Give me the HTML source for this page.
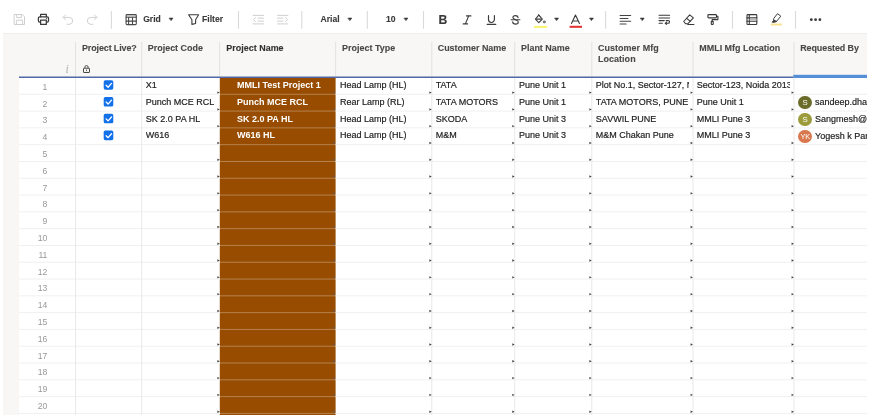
<!DOCTYPE html><html><head><meta charset="utf-8"><title>Sheet</title><style>
html,body{margin:0;padding:0;background:#fff;}
body{width:886px;height:415px;position:relative;overflow:hidden;font-family:"Liberation Sans",sans-serif;color:#222;}
#root{position:absolute;left:0;top:0;width:886px;height:415px;will-change:transform;}
.abs{position:absolute;}
.hdr{position:absolute;left:3px;top:33px;width:864px;height:44px;background:#f8f7f5;border-top:1px solid #efeeec;box-sizing:border-box;}
.lstrip{position:absolute;left:3px;top:33px;width:16px;height:382px;background:#f8f7f5;}
.ht{position:absolute;font-weight:bold;font-size:8.95px;line-height:10.4px;color:#484848;-webkit-text-stroke:0.1px #484848;white-space:nowrap;}
.ct{position:absolute;font-size:9px;line-height:10px;color:#1c1c1c;-webkit-text-stroke:0.18px #1c1c1c;white-space:nowrap;overflow:hidden;}
.rn{position:absolute;font-size:8.6px;line-height:10px;color:#989898;width:20px;text-align:right;}
.vs{position:absolute;width:1px;background:#e4e4e4;}
.hs{position:absolute;height:1px;background:#ececec;}
.tb{position:absolute;font-weight:bold;font-size:8.6px;color:#3a3a3a;-webkit-text-stroke:0.12px #3a3a3a;line-height:10px;white-space:nowrap;}
.tsep{position:absolute;top:11px;width:1px;height:17px;background:#d9d9d9;}
.caret{position:absolute;width:0;height:0;border-left:2.2px solid transparent;border-right:2.2px solid transparent;border-top:3px solid #2a2a2a;top:17.8px;}
.cb{position:absolute;width:9.5px;height:9.5px;border-radius:1.6px;background:#1571e8;}
.mk{position:absolute;width:0;height:0;border-top:1.5px solid transparent;border-bottom:1.5px solid transparent;border-left:2.3px solid #444;}
.av{position:absolute;width:13.5px;height:13.5px;border-radius:50%;color:#fff;font-size:7px;line-height:13.5px;text-align:center;}
</style></head><body><div id="root">
<div class="lstrip"></div><div class="hdr"></div>
<svg class="abs" style="left:0;top:0" width="886" height="33" viewBox="0 0 886 33" fill="none" stroke-linecap="round" stroke-linejoin="round">
<!-- save -->
<g transform="translate(14,14)" stroke="#cfcfcf" stroke-width="1">
<path d="M0.5 0.5H8.3L10.5 2.7V10.5H0.5Z"/><path d="M2.7 0.5V3.6H7.4V0.5"/><path d="M2.4 10.5V6.2H8.6V10.5"/>
</g>
<!-- print -->
<g transform="translate(37.7,13.6)" stroke="#3a3a3a" stroke-width="1.25">
<path d="M2.9 3.2V0.7H8.6V3.2"/><rect x="0.7" y="3.2" width="10.1" height="5.3" rx="1.3"/><rect x="2.9" y="6.4" width="5.7" height="4.4" fill="#fff"/><path d="M8.6 5.0H9.0" stroke-width="0.9"/>
</g>
<!-- undo -->
<g transform="translate(62.6,14.6)" stroke="#cfcfcf" stroke-width="1">
<path d="M3 0.3L0.5 2.8L3 5.3"/><path d="M0.8 2.8H6.6A3.4 3.4 0 0 1 6.6 9.7H4.6"/>
</g>
<!-- redo -->
<g transform="translate(97.4,14.6) scale(-1,1)" stroke="#cfcfcf" stroke-width="1">
<path d="M3 0.3L0.5 2.8L3 5.3"/><path d="M0.8 2.8H6.6A3.4 3.4 0 0 1 6.6 9.7H4.6"/>
</g>
<!-- grid icon -->
<g transform="translate(125.2,14)" stroke="#4a4a4a" stroke-width="1.1">
<rect x="1.1" y="1.3" width="9.8" height="1.6" fill="#d9d9d9" stroke="none"/><rect x="0.9" y="0.6" width="10.2" height="10" rx="0.9"/><path d="M0.9 3.2H11.1M0.9 7.1H11.1M3.4 3.2V10.6M7.3 3.2V10.6"/>
</g>
<!-- filter -->
<g transform="translate(187.9,14.2)" stroke="#3a3a3a" stroke-width="1.1">
<path d="M0.7 0.6H10.7L7.7 5.5V9.3L4 10.2V5.5Z"/>
</g>
<!-- outdent -->
<g transform="translate(252.8,14.9)" stroke="#cfcfcf" stroke-width="1">
<path d="M0.3 0.5H10.7M0.3 9H10.7M5.2 3.3H10.7M5.2 6.2H10.7M2.6 2.7L0.6 4.75L2.6 6.8"/>
</g>
<!-- indent -->
<g transform="translate(277.2,14.9)" stroke="#cfcfcf" stroke-width="1">
<path d="M0.3 0.5H10.7M0.3 9H10.7M0.3 3.3H5.8M0.3 6.2H5.8M8.4 2.7L10.4 4.75L8.4 6.8"/>
</g>
<!-- I -->
<g transform="translate(462.9,15.3)" stroke="#3a3a3a" stroke-width="1.15">
<path d="M3.6 0.6H8M0.3 8.6H4.7M5.8 0.6L2.5 8.6"/>
</g>
<!-- U -->
<g transform="translate(486.9,15.3)" stroke="#3a3a3a" stroke-width="1.15">
<path d="M1.6 0.3V4.2A2.95 2.95 0 0 0 7.5 4.2V0.3"/><path d="M0.2 9H8.9"/>
</g>
<!-- S strike -->
<g transform="translate(510.9,15.3)" stroke="#3a3a3a" stroke-width="1.1">
<path d="M7.2 2.3C7 0.9 5.9 0.3 4.6 0.3C3.1 0.3 2 1 2 2.3C2 3.4 2.9 3.9 4.6 4.4C6.4 4.9 7.4 5.4 7.4 6.7C7.4 8 6.2 8.8 4.6 8.8C3 8.8 1.9 8 1.7 6.6"/><path d="M0.2 4.5H9"/>
</g>
<!-- bucket -->
<g transform="translate(535,14.2)" stroke="#3a3a3a" stroke-width="1.05">
<path d="M3.8 0.9L7.3 4.9L3.8 8.4L0.4 4.9Z"/><path d="M1.3 4.9H6.4"/><path d="M3.6 0.3L4.9 1.9" stroke-width="0.9"/><circle cx="9.2" cy="7.7" r="1" stroke-width="0.8"/>
</g>
<rect x="533.9" y="25.9" width="13.2" height="2" fill="#f8f56c"/>
<!-- A -->
<g transform="translate(570.6,14.6)" stroke="#3a3a3a" stroke-width="1.1">
<path d="M0.9 8.8L4.85 0.5L8.9 8.8M2.3 6.4H7.5"/>
</g>
<rect x="569.6" y="25.8" width="12.4" height="2" fill="#e03030"/>
<!-- align -->
<g transform="translate(619.8,14.9)" stroke="#444" stroke-width="1.05">
<path d="M0.3 0.6H10.9M0.3 3.5H8.2M0.3 6.3H10.9M0.3 9.1H6.3"/>
</g>
<!-- wrap -->
<g transform="translate(658.7,14.6)" stroke="#3a3a3a" stroke-width="1.05">
<path d="M0.3 0.7H10.9M0.3 3.3H10.9M0.3 6H5.6M0.3 8.7H3.7"/><path d="M7.4 6H9.5A1.35 1.35 0 0 1 9.5 8.7H6.7M7.8 7.6L6.5 8.7L7.8 9.8"/>
</g>
<!-- eraser -->
<g transform="translate(683.1,14.2)" stroke="#3a3a3a" stroke-width="1.05">
<path d="M6.6 0.6L10.3 3.6L4.6 9.6H2.6L0.6 7.3Z"/><path d="M3.4 4.2L7.3 7"/><path d="M4.6 10.2H10.8"/>
</g>
<!-- roller -->
<g transform="translate(707.3,14)" stroke="#3a3a3a" stroke-width="1.15">
<rect x="0.6" y="0.6" width="8.6" height="3.3" rx="0.8"/><path d="M9.2 2.2H10.6V5.6H4.9V7.3"/><rect x="4" y="7.3" width="1.9" height="3.2" rx="0.5"/>
</g>
<!-- cond format -->
<g transform="translate(746.4,14)" stroke="#3a3a3a" stroke-width="1.1">
<rect x="0.6" y="0.6" width="9.8" height="9.9" rx="0.8"/><path d="M0.6 3.9H10.4M0.6 7.2H10.4M2.9 0.6V10.5"/><rect x="3.4" y="4.4" width="6.6" height="2.3" fill="#bdbdbd" stroke="none"/>
</g>
<!-- highlighter -->
<g transform="translate(771.4,13.3)" stroke="#3a3a3a" stroke-width="1">
<path d="M6.4 0.6L9.4 2.9L4.9 8.3L2.2 7.2L2.4 5.4Z"/><path d="M2.2 7.2L0.8 8.9L3 8.9L4.9 8.3Z" fill="#3a3a3a"/>
</g>
<rect x="770.9" y="23.5" width="11.1" height="2" fill="#f9e391"/>
<!-- seps -->
<g fill="#dadada" stroke="none"><rect x="110.85" y="11" width="1.1" height="17.7"/><rect x="237.95" y="11" width="1.1" height="17.7"/><rect x="301.25" y="11" width="1.1" height="17.7"/><rect x="366.75" y="11" width="1.1" height="17.7"/><rect x="422.95" y="11" width="1.1" height="17.7"/><rect x="605.05" y="11" width="1.1" height="17.7"/><rect x="731.95" y="11" width="1.1" height="17.7"/><rect x="794.95" y="11" width="1.1" height="17.7"/></g>
<!-- carets -->
<g fill="#333" stroke="#333" stroke-width="0.6"><path d="M169.4 18.1h3.6l-1.8 2.3z"/><path d="M348.2 18.1h3.6l-1.8 2.3z"/><path d="M404.3 18.1h3.6l-1.8 2.3z"/><path d="M554.9 18.1h3.6l-1.8 2.3z"/><path d="M589.8 18.1h3.6l-1.8 2.3z"/><path d="M640.6 18.1h3.6l-1.8 2.3z"/></g>
<!-- dots -->
<g fill="#3a3a3a" stroke="none"><circle cx="811.3" cy="19.7" r="1.4"/><circle cx="815.6" cy="19.7" r="1.4"/><circle cx="819.9" cy="19.7" r="1.4"/></g>
</svg>
<div class="tb" style="left:143.2px;top:14px">Grid</div>
<div class="tb" style="left:202.1px;top:14px">Filter</div>
<div class="tb" style="left:320.5px;top:14px">Arial</div>
<div class="tb" style="left:386px;top:14px">10</div>
<div class="tb" style="left:438.4px;top:12.6px;font-size:12.2px;line-height:14px">B</div>

<div class="abs" style="left:19px;top:78px;width:848px;height:335px;background:#fff"></div>
<svg class="abs" style="left:0;top:0" width="886" height="415" viewBox="0 0 886 415"><rect x="219.8" y="77.9" width="115.8" height="337.2" fill="#974c00"/></svg>
<svg class="abs" style="left:0;top:0" width="886" height="415" viewBox="0 0 886 415"><rect x="19" y="93.78" width="201" height="1" fill="#f0f0f0"/><rect x="220" y="93.78" width="115.6" height="1" fill="#fff" fill-opacity="0.3"/><rect x="335.6" y="93.78" width="531.4" height="1" fill="#f0f0f0"/><rect x="19" y="110.57" width="201" height="1" fill="#f0f0f0"/><rect x="220" y="110.57" width="115.6" height="1" fill="#fff" fill-opacity="0.3"/><rect x="335.6" y="110.57" width="531.4" height="1" fill="#f0f0f0"/><rect x="19" y="127.37" width="201" height="1" fill="#f0f0f0"/><rect x="220" y="127.37" width="115.6" height="1" fill="#fff" fill-opacity="0.3"/><rect x="335.6" y="127.37" width="531.4" height="1" fill="#f0f0f0"/><rect x="19" y="144.16" width="201" height="1" fill="#f0f0f0"/><rect x="220" y="144.16" width="115.6" height="1" fill="#fff" fill-opacity="0.3"/><rect x="335.6" y="144.16" width="531.4" height="1" fill="#f0f0f0"/><rect x="19" y="160.96" width="201" height="1" fill="#f0f0f0"/><rect x="220" y="160.96" width="115.6" height="1" fill="#fff" fill-opacity="0.3"/><rect x="335.6" y="160.96" width="531.4" height="1" fill="#f0f0f0"/><rect x="19" y="177.76" width="201" height="1" fill="#f0f0f0"/><rect x="220" y="177.76" width="115.6" height="1" fill="#fff" fill-opacity="0.3"/><rect x="335.6" y="177.76" width="531.4" height="1" fill="#f0f0f0"/><rect x="19" y="194.55" width="201" height="1" fill="#f0f0f0"/><rect x="220" y="194.55" width="115.6" height="1" fill="#fff" fill-opacity="0.3"/><rect x="335.6" y="194.55" width="531.4" height="1" fill="#f0f0f0"/><rect x="19" y="211.35" width="201" height="1" fill="#f0f0f0"/><rect x="220" y="211.35" width="115.6" height="1" fill="#fff" fill-opacity="0.3"/><rect x="335.6" y="211.35" width="531.4" height="1" fill="#f0f0f0"/><rect x="19" y="228.14" width="201" height="1" fill="#f0f0f0"/><rect x="220" y="228.14" width="115.6" height="1" fill="#fff" fill-opacity="0.3"/><rect x="335.6" y="228.14" width="531.4" height="1" fill="#f0f0f0"/><rect x="19" y="244.94" width="201" height="1" fill="#f0f0f0"/><rect x="220" y="244.94" width="115.6" height="1" fill="#fff" fill-opacity="0.3"/><rect x="335.6" y="244.94" width="531.4" height="1" fill="#f0f0f0"/><rect x="19" y="261.74" width="201" height="1" fill="#f0f0f0"/><rect x="220" y="261.74" width="115.6" height="1" fill="#fff" fill-opacity="0.3"/><rect x="335.6" y="261.74" width="531.4" height="1" fill="#f0f0f0"/><rect x="19" y="278.53" width="201" height="1" fill="#f0f0f0"/><rect x="220" y="278.53" width="115.6" height="1" fill="#fff" fill-opacity="0.3"/><rect x="335.6" y="278.53" width="531.4" height="1" fill="#f0f0f0"/><rect x="19" y="295.33" width="201" height="1" fill="#f0f0f0"/><rect x="220" y="295.33" width="115.6" height="1" fill="#fff" fill-opacity="0.3"/><rect x="335.6" y="295.33" width="531.4" height="1" fill="#f0f0f0"/><rect x="19" y="312.12" width="201" height="1" fill="#f0f0f0"/><rect x="220" y="312.12" width="115.6" height="1" fill="#fff" fill-opacity="0.3"/><rect x="335.6" y="312.12" width="531.4" height="1" fill="#f0f0f0"/><rect x="19" y="328.92" width="201" height="1" fill="#f0f0f0"/><rect x="220" y="328.92" width="115.6" height="1" fill="#fff" fill-opacity="0.3"/><rect x="335.6" y="328.92" width="531.4" height="1" fill="#f0f0f0"/><rect x="19" y="345.72" width="201" height="1" fill="#f0f0f0"/><rect x="220" y="345.72" width="115.6" height="1" fill="#fff" fill-opacity="0.3"/><rect x="335.6" y="345.72" width="531.4" height="1" fill="#f0f0f0"/><rect x="19" y="362.51" width="201" height="1" fill="#f0f0f0"/><rect x="220" y="362.51" width="115.6" height="1" fill="#fff" fill-opacity="0.3"/><rect x="335.6" y="362.51" width="531.4" height="1" fill="#f0f0f0"/><rect x="19" y="379.31" width="201" height="1" fill="#f0f0f0"/><rect x="220" y="379.31" width="115.6" height="1" fill="#fff" fill-opacity="0.3"/><rect x="335.6" y="379.31" width="531.4" height="1" fill="#f0f0f0"/><rect x="19" y="396.10" width="201" height="1" fill="#f0f0f0"/><rect x="220" y="396.10" width="115.6" height="1" fill="#fff" fill-opacity="0.3"/><rect x="335.6" y="396.10" width="531.4" height="1" fill="#f0f0f0"/><rect x="19" y="412.90" width="201" height="1" fill="#f0f0f0"/><rect x="220" y="412.90" width="115.6" height="1" fill="#fff" fill-opacity="0.3"/><rect x="335.6" y="412.90" width="531.4" height="1" fill="#f0f0f0"/><rect x="75.00" y="41.8" width="1" height="34.4" fill="#e3e2e0"/><rect x="75.00" y="78" width="1" height="337" fill="#e9e9e9"/><rect x="141.20" y="41.8" width="1" height="34.4" fill="#e3e2e0"/><rect x="141.20" y="78" width="1" height="337" fill="#e9e9e9"/><rect x="219.10" y="41.8" width="1" height="34.4" fill="#e3e2e0"/><rect x="335.10" y="41.8" width="1" height="34.4" fill="#e3e2e0"/><rect x="431.30" y="41.8" width="1" height="34.4" fill="#e3e2e0"/><rect x="431.30" y="78" width="1" height="337" fill="#e9e9e9"/><rect x="514.20" y="41.8" width="1" height="34.4" fill="#e3e2e0"/><rect x="514.20" y="78" width="1" height="337" fill="#e9e9e9"/><rect x="591.30" y="41.8" width="1" height="34.4" fill="#e3e2e0"/><rect x="591.30" y="78" width="1" height="337" fill="#e9e9e9"/><rect x="692.50" y="41.8" width="1" height="34.4" fill="#e3e2e0"/><rect x="692.50" y="78" width="1" height="337" fill="#e9e9e9"/><rect x="793.50" y="41.8" width="1" height="34.4" fill="#e3e2e0"/><rect x="793.50" y="78" width="1" height="337" fill="#e9e9e9"/></svg>
<svg class="abs" style="left:0;top:0" width="886" height="415" viewBox="0 0 886 415"><rect x="19" y="76.5" width="774.3" height="1.5" fill="#5068a8"/><rect x="793.3" y="74.8" width="73.7" height="3.2" fill="#5590d6"/></svg>
<div class="ht" style="left:82.0px;top:43.2px;letter-spacing:-0.115px">Project Live?</div>
<div class="ht" style="left:147.8px;top:43.2px;letter-spacing:0.000px">Project Code</div>
<div class="ht" style="left:226.2px;top:43.2px;letter-spacing:0.025px;color:#303030;-webkit-text-stroke-color:#303030">Project Name</div>
<div class="ht" style="left:342.0px;top:43.2px;letter-spacing:0.020px">Project Type</div>
<div class="ht" style="left:437.7px;top:43.2px;letter-spacing:0.000px">Customer Name</div>
<div class="ht" style="left:521.0px;top:43.2px;letter-spacing:0.000px">Plant Name</div>
<div class="ht" style="left:598.0px;top:43.2px;letter-spacing:0.050px">Customer Mfg<br>Location</div>
<div class="ht" style="left:699.3px;top:43.2px;letter-spacing:0.000px">MMLI Mfg Location</div>
<div class="ht" style="left:800.2px;top:43.2px;letter-spacing:-0.075px">Requested By</div>
<div class="abs" style="left:65.4px;top:63.3px;font-family:'Liberation Serif',serif;font-style:italic;font-size:11.5px;line-height:12px;color:#b0b0b0">i</div>
<svg class="abs" style="left:82px;top:64px" width="10" height="10" viewBox="0 0 10 10"><rect x="1.5" y="4.2" width="6" height="4.3" rx="0.4" fill="none" stroke="#4a4a4a" stroke-width="1"/><path d="M2.9 4.2V3.1a1.6 1.6 0 0 1 3.2 0v1.1" fill="none" stroke="#4a4a4a" stroke-width="0.95"/><rect x="4.1" y="5.4" width="0.8" height="1.8" fill="#4a4a4a"/></svg>
<div class="rn" style="left:27.3px;top:81.78px">1</div>
<div class="ct" style="left:145.8px;top:80.03px;width:72px">X1</div>
<div class="ct" style="left:237px;top:80.03px;width:96px;color:#fff;font-weight:bold;-webkit-text-stroke:0">MMLI Test Project 1</div>
<div class="ct" style="left:339.9px;top:80.03px;width:88px">Head Lamp (HL)</div>
<div class="ct" style="left:435.7px;top:80.03px;width:75px">TATA</div>
<div class="ct" style="left:518.9px;top:80.03px;width:70px">Pune Unit 1</div>
<div class="ct" style="left:595.8px;top:80.03px;width:93px">Plot No.1, Sector-127, Noida</div>
<div class="ct" style="left:696.8px;top:80.03px;width:93.2px">Sector-123, Noida 201301</div>
<div class="rn" style="left:27.3px;top:98.58px">2</div>
<div class="ct" style="left:145.8px;top:96.83px;width:72px">Punch MCE RCL</div>
<div class="ct" style="left:237px;top:96.83px;width:96px;color:#fff;font-weight:bold;-webkit-text-stroke:0">Punch MCE RCL</div>
<div class="ct" style="left:339.9px;top:96.83px;width:88px">Rear Lamp (RL)</div>
<div class="ct" style="left:435.7px;top:96.83px;width:75px">TATA MOTORS</div>
<div class="ct" style="left:518.9px;top:96.83px;width:70px">Pune Unit 1</div>
<div class="ct" style="left:595.8px;top:96.83px;width:93px">TATA MOTORS, PUNE</div>
<div class="ct" style="left:696.8px;top:96.83px;width:93.2px">Pune Unit 1</div>
<div class="av" style="left:798.4px;top:95.98px;background:#6b6b2a;font-size:7.8px">S</div>
<div class="ct" style="left:815px;top:97.23px;width:52px">sandeep.dhage</div>
<div class="rn" style="left:27.3px;top:115.37px">3</div>
<div class="ct" style="left:145.8px;top:113.62px;width:72px">SK 2.0 PA HL</div>
<div class="ct" style="left:237px;top:113.62px;width:96px;color:#fff;font-weight:bold;-webkit-text-stroke:0">SK 2.0 PA HL</div>
<div class="ct" style="left:339.9px;top:113.62px;width:88px">Head Lamp (HL)</div>
<div class="ct" style="left:435.7px;top:113.62px;width:75px">SKODA</div>
<div class="ct" style="left:518.9px;top:113.62px;width:70px">Pune Unit 3</div>
<div class="ct" style="left:595.8px;top:113.62px;width:93px">SAVWIL PUNE</div>
<div class="ct" style="left:696.8px;top:113.62px;width:93.2px">MMLI Pune 3</div>
<div class="av" style="left:798.4px;top:112.77px;background:#9b9b3c;font-size:7.8px">S</div>
<div class="ct" style="left:815px;top:114.02px;width:52px">Sangmesh@mmli</div>
<div class="rn" style="left:27.3px;top:132.17px">4</div>
<div class="ct" style="left:145.8px;top:130.42px;width:72px">W616</div>
<div class="ct" style="left:237px;top:130.42px;width:96px;color:#fff;font-weight:bold;-webkit-text-stroke:0">W616 HL</div>
<div class="ct" style="left:339.9px;top:130.42px;width:88px">Head Lamp (HL)</div>
<div class="ct" style="left:435.7px;top:130.42px;width:75px">M&amp;M</div>
<div class="ct" style="left:518.9px;top:130.42px;width:70px">Pune Unit 3</div>
<div class="ct" style="left:595.8px;top:130.42px;width:93px">M&amp;M Chakan Pune</div>
<div class="ct" style="left:696.8px;top:130.42px;width:93.2px">MMLI Pune 3</div>
<div class="av" style="left:798.4px;top:129.57px;background:#d9784e;font-size:7.4px;letter-spacing:-0.2px">YK</div>
<div class="ct" style="left:815px;top:130.82px;width:52px">Yogesh k Parmar</div>
<div class="rn" style="left:27.3px;top:148.96px">5</div>
<div class="rn" style="left:27.3px;top:165.76px">6</div>
<div class="rn" style="left:27.3px;top:182.56px">7</div>
<div class="rn" style="left:27.3px;top:199.35px">8</div>
<div class="rn" style="left:27.3px;top:216.15px">9</div>
<div class="rn" style="left:27.3px;top:232.94px">10</div>
<div class="rn" style="left:27.3px;top:249.74px">11</div>
<div class="rn" style="left:27.3px;top:266.54px">12</div>
<div class="rn" style="left:27.3px;top:283.33px">13</div>
<div class="rn" style="left:27.3px;top:300.13px">14</div>
<div class="rn" style="left:27.3px;top:316.92px">15</div>
<div class="rn" style="left:27.3px;top:333.72px">16</div>
<div class="rn" style="left:27.3px;top:350.52px">17</div>
<div class="rn" style="left:27.3px;top:367.31px">18</div>
<div class="rn" style="left:27.3px;top:384.11px">19</div>
<div class="rn" style="left:27.3px;top:400.90px">20</div>
<svg class="abs" style="left:0;top:0" width="886" height="415" viewBox="0 0 886 415"><path fill="#3c3c3c" d="M217.40 91.38l2.3 1.2l-2.3 1.2zM429.40 91.38l2.3 1.2l-2.3 1.2zM512.30 91.38l2.3 1.2l-2.3 1.2zM589.40 91.38l2.3 1.2l-2.3 1.2zM690.60 91.38l2.3 1.2l-2.3 1.2zM791.60 91.38l2.3 1.2l-2.3 1.2zM217.40 108.18l2.3 1.2l-2.3 1.2zM429.40 108.18l2.3 1.2l-2.3 1.2zM512.30 108.18l2.3 1.2l-2.3 1.2zM589.40 108.18l2.3 1.2l-2.3 1.2zM690.60 108.18l2.3 1.2l-2.3 1.2zM791.60 108.18l2.3 1.2l-2.3 1.2zM217.40 124.97l2.3 1.2l-2.3 1.2zM429.40 124.97l2.3 1.2l-2.3 1.2zM512.30 124.97l2.3 1.2l-2.3 1.2zM589.40 124.97l2.3 1.2l-2.3 1.2zM690.60 124.97l2.3 1.2l-2.3 1.2zM791.60 124.97l2.3 1.2l-2.3 1.2zM217.40 141.77l2.3 1.2l-2.3 1.2zM429.40 141.77l2.3 1.2l-2.3 1.2zM512.30 141.77l2.3 1.2l-2.3 1.2zM589.40 141.77l2.3 1.2l-2.3 1.2zM690.60 141.77l2.3 1.2l-2.3 1.2zM791.60 141.77l2.3 1.2l-2.3 1.2zM217.40 158.56l2.3 1.2l-2.3 1.2zM429.40 158.56l2.3 1.2l-2.3 1.2zM512.30 158.56l2.3 1.2l-2.3 1.2zM589.40 158.56l2.3 1.2l-2.3 1.2zM690.60 158.56l2.3 1.2l-2.3 1.2zM791.60 158.56l2.3 1.2l-2.3 1.2zM217.40 175.36l2.3 1.2l-2.3 1.2zM429.40 175.36l2.3 1.2l-2.3 1.2zM512.30 175.36l2.3 1.2l-2.3 1.2zM589.40 175.36l2.3 1.2l-2.3 1.2zM690.60 175.36l2.3 1.2l-2.3 1.2zM791.60 175.36l2.3 1.2l-2.3 1.2zM217.40 192.16l2.3 1.2l-2.3 1.2zM429.40 192.16l2.3 1.2l-2.3 1.2zM512.30 192.16l2.3 1.2l-2.3 1.2zM589.40 192.16l2.3 1.2l-2.3 1.2zM690.60 192.16l2.3 1.2l-2.3 1.2zM791.60 192.16l2.3 1.2l-2.3 1.2zM217.40 208.95l2.3 1.2l-2.3 1.2zM429.40 208.95l2.3 1.2l-2.3 1.2zM512.30 208.95l2.3 1.2l-2.3 1.2zM589.40 208.95l2.3 1.2l-2.3 1.2zM690.60 208.95l2.3 1.2l-2.3 1.2zM791.60 208.95l2.3 1.2l-2.3 1.2zM217.40 225.75l2.3 1.2l-2.3 1.2zM429.40 225.75l2.3 1.2l-2.3 1.2zM512.30 225.75l2.3 1.2l-2.3 1.2zM589.40 225.75l2.3 1.2l-2.3 1.2zM690.60 225.75l2.3 1.2l-2.3 1.2zM791.60 225.75l2.3 1.2l-2.3 1.2zM217.40 242.54l2.3 1.2l-2.3 1.2zM429.40 242.54l2.3 1.2l-2.3 1.2zM512.30 242.54l2.3 1.2l-2.3 1.2zM589.40 242.54l2.3 1.2l-2.3 1.2zM690.60 242.54l2.3 1.2l-2.3 1.2zM791.60 242.54l2.3 1.2l-2.3 1.2zM217.40 259.34l2.3 1.2l-2.3 1.2zM429.40 259.34l2.3 1.2l-2.3 1.2zM512.30 259.34l2.3 1.2l-2.3 1.2zM589.40 259.34l2.3 1.2l-2.3 1.2zM690.60 259.34l2.3 1.2l-2.3 1.2zM791.60 259.34l2.3 1.2l-2.3 1.2zM217.40 276.14l2.3 1.2l-2.3 1.2zM429.40 276.14l2.3 1.2l-2.3 1.2zM512.30 276.14l2.3 1.2l-2.3 1.2zM589.40 276.14l2.3 1.2l-2.3 1.2zM690.60 276.14l2.3 1.2l-2.3 1.2zM791.60 276.14l2.3 1.2l-2.3 1.2zM217.40 292.93l2.3 1.2l-2.3 1.2zM429.40 292.93l2.3 1.2l-2.3 1.2zM512.30 292.93l2.3 1.2l-2.3 1.2zM589.40 292.93l2.3 1.2l-2.3 1.2zM690.60 292.93l2.3 1.2l-2.3 1.2zM791.60 292.93l2.3 1.2l-2.3 1.2zM217.40 309.73l2.3 1.2l-2.3 1.2zM429.40 309.73l2.3 1.2l-2.3 1.2zM512.30 309.73l2.3 1.2l-2.3 1.2zM589.40 309.73l2.3 1.2l-2.3 1.2zM690.60 309.73l2.3 1.2l-2.3 1.2zM791.60 309.73l2.3 1.2l-2.3 1.2zM217.40 326.52l2.3 1.2l-2.3 1.2zM429.40 326.52l2.3 1.2l-2.3 1.2zM512.30 326.52l2.3 1.2l-2.3 1.2zM589.40 326.52l2.3 1.2l-2.3 1.2zM690.60 326.52l2.3 1.2l-2.3 1.2zM791.60 326.52l2.3 1.2l-2.3 1.2zM217.40 343.32l2.3 1.2l-2.3 1.2zM429.40 343.32l2.3 1.2l-2.3 1.2zM512.30 343.32l2.3 1.2l-2.3 1.2zM589.40 343.32l2.3 1.2l-2.3 1.2zM690.60 343.32l2.3 1.2l-2.3 1.2zM791.60 343.32l2.3 1.2l-2.3 1.2zM217.40 360.12l2.3 1.2l-2.3 1.2zM429.40 360.12l2.3 1.2l-2.3 1.2zM512.30 360.12l2.3 1.2l-2.3 1.2zM589.40 360.12l2.3 1.2l-2.3 1.2zM690.60 360.12l2.3 1.2l-2.3 1.2zM791.60 360.12l2.3 1.2l-2.3 1.2zM217.40 376.91l2.3 1.2l-2.3 1.2zM429.40 376.91l2.3 1.2l-2.3 1.2zM512.30 376.91l2.3 1.2l-2.3 1.2zM589.40 376.91l2.3 1.2l-2.3 1.2zM690.60 376.91l2.3 1.2l-2.3 1.2zM791.60 376.91l2.3 1.2l-2.3 1.2zM217.40 393.71l2.3 1.2l-2.3 1.2zM429.40 393.71l2.3 1.2l-2.3 1.2zM512.30 393.71l2.3 1.2l-2.3 1.2zM589.40 393.71l2.3 1.2l-2.3 1.2zM690.60 393.71l2.3 1.2l-2.3 1.2zM791.60 393.71l2.3 1.2l-2.3 1.2zM217.40 410.50l2.3 1.2l-2.3 1.2zM429.40 410.50l2.3 1.2l-2.3 1.2zM512.30 410.50l2.3 1.2l-2.3 1.2zM589.40 410.50l2.3 1.2l-2.3 1.2zM690.60 410.50l2.3 1.2l-2.3 1.2zM791.60 410.50l2.3 1.2l-2.3 1.2z"/><path fill="#6b5a55" d="M333.20 91.38l2.3 1.2l-2.3 1.2zM333.20 108.18l2.3 1.2l-2.3 1.2zM333.20 124.97l2.3 1.2l-2.3 1.2zM333.20 141.77l2.3 1.2l-2.3 1.2zM333.20 158.56l2.3 1.2l-2.3 1.2zM333.20 175.36l2.3 1.2l-2.3 1.2zM333.20 192.16l2.3 1.2l-2.3 1.2zM333.20 208.95l2.3 1.2l-2.3 1.2zM333.20 225.75l2.3 1.2l-2.3 1.2zM333.20 242.54l2.3 1.2l-2.3 1.2zM333.20 259.34l2.3 1.2l-2.3 1.2zM333.20 276.14l2.3 1.2l-2.3 1.2zM333.20 292.93l2.3 1.2l-2.3 1.2zM333.20 309.73l2.3 1.2l-2.3 1.2zM333.20 326.52l2.3 1.2l-2.3 1.2zM333.20 343.32l2.3 1.2l-2.3 1.2zM333.20 360.12l2.3 1.2l-2.3 1.2zM333.20 376.91l2.3 1.2l-2.3 1.2zM333.20 393.71l2.3 1.2l-2.3 1.2zM333.20 410.50l2.3 1.2l-2.3 1.2z"/><g transform="translate(103.7,80.18)"><rect width="9.6" height="9.6" rx="1.7" fill="#1270e8"/><path d="M2.4 5.1L4.4 7.1L7.8 3.2" fill="none" stroke="#fff" stroke-width="1.3" stroke-linecap="round" stroke-linejoin="round"/></g><g transform="translate(103.7,96.98)"><rect width="9.6" height="9.6" rx="1.7" fill="#1270e8"/><path d="M2.4 5.1L4.4 7.1L7.8 3.2" fill="none" stroke="#fff" stroke-width="1.3" stroke-linecap="round" stroke-linejoin="round"/></g><g transform="translate(103.7,113.77)"><rect width="9.6" height="9.6" rx="1.7" fill="#1270e8"/><path d="M2.4 5.1L4.4 7.1L7.8 3.2" fill="none" stroke="#fff" stroke-width="1.3" stroke-linecap="round" stroke-linejoin="round"/></g><g transform="translate(103.7,130.57)"><rect width="9.6" height="9.6" rx="1.7" fill="#1270e8"/><path d="M2.4 5.1L4.4 7.1L7.8 3.2" fill="none" stroke="#fff" stroke-width="1.3" stroke-linecap="round" stroke-linejoin="round"/></g></svg>
</div></body></html>
